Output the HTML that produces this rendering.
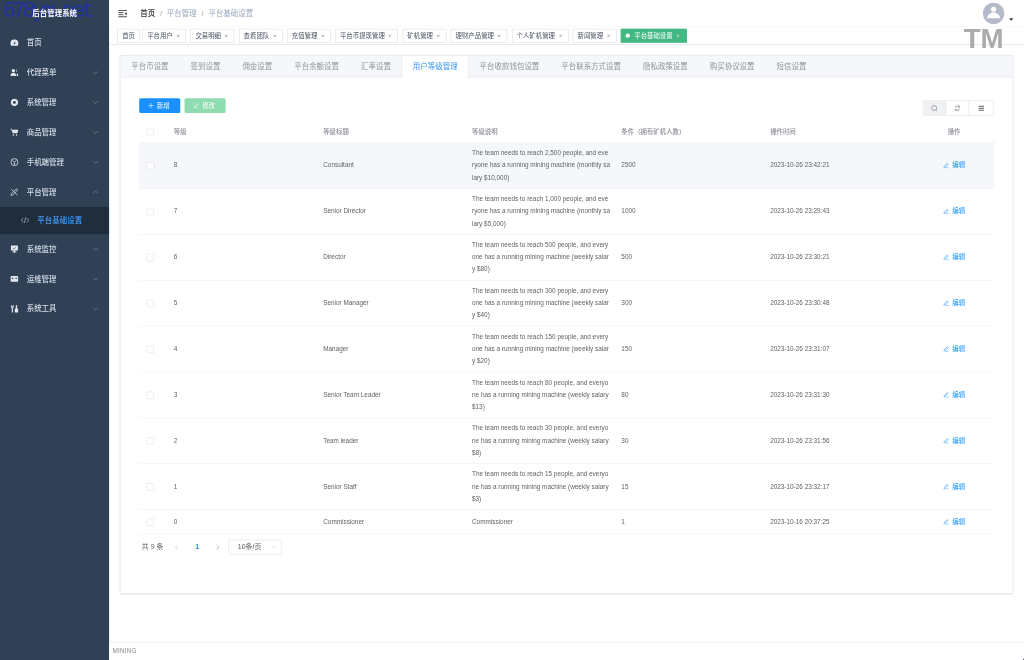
<!DOCTYPE html>
<html lang="zh-CN">
<head>
<meta charset="utf-8">
<title>后台管理系统</title>
<style>
*{box-sizing:border-box;margin:0;padding:0}
html,body{width:1024px;height:660px;overflow:hidden;background:#fff}
body{font-family:"Liberation Sans","Noto Sans CJK SC",sans-serif;color:#606266;-webkit-font-smoothing:antialiased}
#root{filter:blur(.25px);position:absolute;left:0;top:0;width:1920px;height:1238px;transform:scale(.533333);transform-origin:0 0;background:#fff;overflow:hidden;font-size:14px}
svg{display:block}
/* sidebar */
.sidebar{position:absolute;left:0;top:0;width:205px;height:1238px;background:#304156;overflow:hidden}
.wm{position:absolute;left:5px;top:-2px;font-family:"Liberation Mono",monospace;font-size:41px;line-height:44px;color:#2231a0;letter-spacing:-6.1px;white-space:nowrap;font-weight:400}
.logo{position:absolute;left:0;top:0;width:205px;height:50px;line-height:51px;text-align:center;color:#fff;font-weight:700;font-size:14px}
.menu{position:absolute;left:0;top:52px;width:205px}
.mi{position:relative;height:56px;line-height:56px;padding-left:20px;color:#bfcbd9;font-size:14px;white-space:nowrap}
.mi .ic{position:absolute;left:19px;top:20px;width:16px;height:16px;color:#e4e9f0}
.mi .tx{position:absolute;left:50px;top:0;font-weight:500;color:#d3dbe5}
.mi .ar{position:absolute;right:20px;top:22px;width:12px;height:12px}
.mi.sub{height:51px;line-height:51px;background:#1f2d3d}
.mi.sub .ic{left:39px;top:17px;color:#a9b5c4}
.mi.sub .tx{left:70px;color:#409eff}
/* main */
.main{position:absolute;left:205px;top:0;width:1715px;height:1238px;background:#fff}
.navbar{position:absolute;left:0;top:0;width:1715px;height:50px;background:#fff;box-shadow:0 1px 4px rgba(0,21,41,.08)}
.hamb{position:absolute;left:15px;top:15px;width:20px;height:20px}
.bc{position:absolute;left:58px;top:0;height:50px;line-height:50px;font-size:14px;white-space:nowrap}
.bc span{display:inline-block;vertical-align:top}
.bc .a{color:#303133;font-weight:500}
.bc .n{color:#97a8be}
.bc .s{margin:0 9px;color:#c0c4cc;font-weight:700}
.avatar{position:absolute;left:1638px;top:5px;width:40px;height:40px;border-radius:50%;background:#b5bacb;overflow:hidden}
.caret{position:absolute;left:1687px;top:34px;width:0;height:0;border:4.5px solid transparent;border-top:5px solid #303133}
.tm{position:absolute;left:1602px;top:44.5px;font-size:52px;line-height:54px;font-weight:700;color:#ababab;letter-spacing:-.5px;z-index:5}
.tags{position:absolute;left:0;top:50px;width:1715px;height:34px;background:#fff;border-bottom:1px solid #d8dce5;box-shadow:0 1px 3px 0 rgba(0,0,0,.12),0 0 3px 0 rgba(0,0,0,.04);white-space:nowrap;font-size:12px}
.tag{display:inline-block;position:relative;height:26px;line-height:24px;border:1px solid #d8dce5;color:#495060;background:#fff;padding:0 8px;font-size:12px;margin-left:5px;margin-top:4px;vertical-align:top}
.tag:first-child{margin-left:15px}
.tag .x{display:inline-block;width:16px;height:16px;vertical-align:-4px;color:#6d7582}
.tag.on{background:#42b983;color:#fff;border-color:#42b983}
.tag.on .x{color:#fff;margin-right:2px}
.tag.on .dot{display:inline-block;width:8px;height:8px;border-radius:50%;background:#fff;margin-right:8px;vertical-align:0}
/* app */
.card{position:absolute;left:20px;top:104px;width:1675px;height:1009px;background:#fff;border:1px solid #dcdfe6;box-shadow:0 2px 4px 0 rgba(0,0,0,.12),0 0 6px 0 rgba(0,0,0,.04)}
.thead{position:absolute;left:0;top:0;width:1673px;height:40px;background:#f5f7fa;border-bottom:1px solid #e4e7ed;white-space:nowrap;font-size:0}
.tab{display:inline-block;height:40px;line-height:40px;padding:0 20.100px;font-size:14px;color:#909399;vertical-align:top;border-left:1px solid transparent;border-right:1px solid transparent;margin-left:-1px}
.tab:first-child{margin-left:-1px}
.tab.on{color:#3a97f5;background:#fff;border-left-color:#dcdfe6;border-right-color:#dcdfe6;height:41px}
.footer{position:absolute;left:0;top:1204px;width:1715px;height:34px;border-top:1px solid #e5e5e5;font-size:12px;line-height:32px;padding-left:6px;color:#888;letter-spacing:.3px;background:#fff}
.dot-br{position:absolute;left:1916.500px;top:1233.500px;width:12px;height:12px;border-radius:50%;background:#3a4660}

.pane{position:absolute;left:35px;top:40px;width:1603px;height:960px}
.btn{position:absolute;top:39px;height:28px;border-radius:3px;color:#fff;font-size:12px;line-height:28px;white-space:nowrap}
.btn svg{position:absolute;left:16px;top:8px}
.btn span{position:absolute;left:33px;top:0}
.btn.add{left:0;width:77px;background:#1890ff}
.btn.upd{left:85px;width:77px;background:#8edcb0}
.tools{position:absolute;right:1px;top:43px;width:133px;height:29px;border:1px solid #dcdfe6;border-radius:3px;background:#fff;overflow:hidden}
.tb{position:absolute;top:0;width:43px;height:27px;border-left:1px solid #dcdfe6}
.tb svg{position:absolute;left:15px;top:7.5px}
.tb.first{left:0;border-left:0;background:#f0f1f3}
.tb:nth-child(2){left:42px}
.tb:nth-child(3){left:85px;width:46px}.tb:nth-child(3) svg{left:17px}
.tbl{position:absolute;left:0;top:82px;width:1603px;table-layout:fixed;border-collapse:separate;border-spacing:0;font-size:12px;color:#606266}
.tbl th,.tbl td{border-bottom:1px solid #ebeef5;padding:0 10px;text-align:left;vertical-align:middle;line-height:23px;font-weight:400;white-space:nowrap;overflow:hidden}
.tbl tr.h{height:41px}
.tbl th{color:#8a8e96;font-weight:500}
.tbl tr.r{height:86px}
.tbl tr.one{height:46px}
.hovbg{position:absolute;left:0;top:123px;width:1603px;height:85px;background:#f5f7fa}
.tbl .sel{padding:0 0 0 14px}
.tbl .op{text-align:center}
.cb{display:block;width:14px;height:14px;border:1px solid #dcdfe6;border-radius:2px;background:#fff}
.edit{display:inline-block;color:#1890ff;font-size:12px;line-height:23px;white-space:nowrap}
.edit svg{display:inline-block;vertical-align:-1.5px}
.edit span{margin-left:5px}
.pg{position:absolute;left:5px;top:867px;height:28px;line-height:28px;font-size:13px;color:#606266;white-space:nowrap}
.pg>span{position:absolute;top:0;height:28px}
.pg .total{left:0}
.pg .pb{left:50.400px;width:35.500px}
.pg .pb svg{position:absolute;left:8.800px;top:8px}
.pg .pn{left:85.900px;width:35.500px;text-align:center;color:#1890ff;font-weight:700}
.pg .pb.nx{left:121.400px}
.pg .pb.nx svg{left:14.800px}
.pg .sz{left:162px;width:100px;border:1px solid #dcdfe6;border-radius:3px;font-size:13px;line-height:26px;color:#606266}
.pg .sz span{position:absolute;left:0;width:78px;text-align:center}
.pg .sz svg{position:absolute;right:8px;top:7px}
</style>
</head>
<body>
<div id="root">
  <div class="sidebar">
    <div class="wm">678ym.net</div>
    <div class="logo">后台管理系统</div>
    <div class="menu">
      <div class="mi"><svg class="ic" viewBox="0 0 14 14"><path d="M7 1.800A6.600 6.600 0 0 0 .4 8.400c0 1.300.4 2.600 1.100 3.600h11c.7-1 1.100-2.300 1.100-3.600A6.600 6.600 0 0 0 7 1.800zm0 7.900a1.300 1.300 0 0 1-1.300-1.300c0-.5.300-1 .800-1.200L9.800 4.500 8.100 7.700c.100.200.200.400.200.700A1.300 1.300 0 0 1 7 9.700z" fill="currentColor"/></svg><span class="tx">首页</span></div>
      <div class="mi"><svg class="ic" viewBox="0 0 14 14"><circle cx="5.300" cy="4" r="2.700" fill="currentColor"/><path d="M.5 12.600c0-3.300 1.900-5.300 4.800-5.300s4.800 2 4.800 5.300z" fill="currentColor"/><path d="M9.300 1.600a2.600 2.600 0 0 1 0 5 3.800 3.800 0 0 0 0-5zM10.400 7.600c1.900.6 3.100 2.300 3.100 5h-2.300c0-2-.2-3.700-.8-5z" fill="currentColor"/></svg><span class="tx">代理菜单</span><svg class="ar" viewBox="0 0 12 12"><path d="M1.800 4l4.200 4.200L10.200 4" fill="none" stroke="#8795a8" stroke-width="1.200"/></svg></div>
      <div class="mi"><svg class="ic" viewBox="0 0 14 14"><path d="M7 .6l1.500 1.300 2-.3.700 1.900 1.800.9-.5 1.900.9 1.700-1.400 1.400-.1 2-2 .4L8.700 13.400 7 12.500l-1.700.9-1.200-1.600-2-.4-.1-2L.6 8l.9-1.700L1 4.400l1.800-.9.700-1.900 2 .3z" fill="currentColor"/><circle cx="7" cy="7" r="2.400" fill="#304156"/></svg><span class="tx">系统管理</span><svg class="ar" viewBox="0 0 12 12"><path d="M1.800 4l4.200 4.200L10.200 4" fill="none" stroke="#8795a8" stroke-width="1.200"/></svg></div>
      <div class="mi"><svg class="ic" viewBox="0 0 14 14"><path d="M.3 1.200h2.300l.6 1.600h10.300l-1.600 6H4.400L2 2.600H.3z" fill="currentColor"/><circle cx="5.300" cy="11.400" r="1.300" fill="currentColor"/><circle cx="10.500" cy="11.400" r="1.300" fill="currentColor"/></svg><span class="tx">商品管理</span><svg class="ar" viewBox="0 0 12 12"><path d="M1.800 4l4.200 4.200L10.200 4" fill="none" stroke="#8795a8" stroke-width="1.200"/></svg></div>
      <div class="mi"><svg class="ic" viewBox="0 0 14 14"><circle cx="7" cy="7" r="5.800" fill="none" stroke="currentColor" stroke-width="1.300"/><path d="M3.800 4.200L7 7.200l3.200-3M7 7.200v4.300" fill="none" stroke="currentColor" stroke-width="1.300"/></svg><span class="tx">手机端管理</span><svg class="ar" viewBox="0 0 12 12"><path d="M1.800 4l4.200 4.200L10.200 4" fill="none" stroke="#8795a8" stroke-width="1.200"/></svg></div>
      <div class="mi"><svg class="ic" viewBox="0 0 14 14"><path d="M1.300 12.700l.6-2.700 7.800-7.800a1.500 1.500 0 0 1 2.100 2.100L4 12.100z" fill="none" stroke="currentColor" stroke-width="1.200"/><path d="M1.800 2l10.400 10.400" stroke="currentColor" stroke-width="1.200" fill="none"/></svg><span class="tx">平台管理</span><svg class="ar" viewBox="0 0 12 12"><path d="M1.800 8L6 3.800 10.200 8" fill="none" stroke="#8795a8" stroke-width="1.200"/></svg></div>
      <div class="mi sub"><svg class="ic" viewBox="0 0 14 14"><path d="M4 3.500L.8 7 4 10.500M10 3.500L13.200 7 10 10.500M8.200 2.500L5.800 11.500" fill="none" stroke="currentColor" stroke-width="1.300"/></svg><span class="tx">平台基础设置</span></div>
      <div class="mi"><svg class="ic" viewBox="0 0 14 14"><path d="M1.300 1.300h11.400v8.200H8.300l.5 1.800h1.500v1.300H3.700v-1.300h1.500l.5-1.800H1.300z" fill="currentColor"/><path d="M4 5.500l2 1.800 3.500-3.300" stroke="#304156" stroke-width="1" fill="none"/></svg><span class="tx">系统监控</span><svg class="ar" viewBox="0 0 12 12"><path d="M1.800 4l4.200 4.200L10.200 4" fill="none" stroke="#8795a8" stroke-width="1.200"/></svg></div>
      <div class="mi"><svg class="ic" viewBox="0 0 14 14"><rect x=".8" y="2.300" width="12.400" height="9.400" rx="1.500" fill="currentColor"/><rect x="3" y="5" width="2.200" height="2.200" fill="#304156"/><rect x="8.800" y="5" width="2.200" height="2.200" fill="#304156"/></svg><span class="tx">运维管理</span><svg class="ar" viewBox="0 0 12 12"><path d="M1.800 4l4.200 4.200L10.200 4" fill="none" stroke="#8795a8" stroke-width="1.200"/></svg></div>
      <div class="mi"><svg class="ic" viewBox="0 0 14 14"><path d="M1.200 1v3.200c0 .8.600 1.400 1.400 1.500V13h1.900V5.700c.8-.1 1.400-.7 1.400-1.500V1H4.700v2.800H3.900V1H3.200v2.800h-.8V1z" fill="currentColor"/><path d="M9.300 1h2.200v5.200c1 .4 1.700 1.400 1.700 2.500V13H7.600V8.700c0-1.100.7-2.100 1.700-2.500z" fill="currentColor"/></svg><span class="tx">系统工具</span><svg class="ar" viewBox="0 0 12 12"><path d="M1.800 4l4.200 4.200L10.200 4" fill="none" stroke="#8795a8" stroke-width="1.200"/></svg></div>
    </div>
  </div>
  <div class="main">
    <div class="navbar">
      <svg class="hamb" viewBox="-2.500 -3 25 25"><g fill="#303133"><rect x="0" y="1.5" width="20" height="2"/><rect x="0" y="6.8" width="11.5" height="2"/><rect x="0" y="11.7" width="11.5" height="2"/><rect x="0" y="16.6" width="20" height="2"/><path d="M19.6 6.2v8l-5.2-4z"/></g></svg>
      <div class="bc"><span class="a">首页</span><span class="s">/</span><span class="n">平台管理</span><span class="s">/</span><span class="n">平台基础设置</span></div>
      <div class="avatar"><svg viewBox="0 0 40 40" width="40" height="40"><circle cx="20" cy="12.3" r="4.8" fill="#fff"/><path d="M7.5 29c2-5.500 5.500-10.500 12.500-10.500S30.500 23.500 32.500 29z" fill="#fff"/></svg></div>
      <div class="caret"></div>
    </div>
    <div class="tags"><span class="tag">首页</span><span class="tag">平台用户<i class="x"><svg viewBox="0 0 16 16" width="16" height="16"><path d="M8 6l4.200 4.200M12.200 6L8 10.200" stroke="currentColor" stroke-width="1" fill="none"/></svg></i></span>
      <span class="tag">交易明细<i class="x"><svg viewBox="0 0 16 16" width="16" height="16"><path d="M8 6l4.200 4.200M12.200 6L8 10.200" stroke="currentColor" stroke-width="1" fill="none"/></svg></i></span>
      <span class="tag">查看团队<i class="x"><svg viewBox="0 0 16 16" width="16" height="16"><path d="M8 6l4.200 4.200M12.200 6L8 10.200" stroke="currentColor" stroke-width="1" fill="none"/></svg></i></span>
      <span class="tag">充值管理<i class="x"><svg viewBox="0 0 16 16" width="16" height="16"><path d="M8 6l4.200 4.200M12.200 6L8 10.200" stroke="currentColor" stroke-width="1" fill="none"/></svg></i></span>
      <span class="tag">平台币提现管理<i class="x"><svg viewBox="0 0 16 16" width="16" height="16"><path d="M8 6l4.200 4.200M12.200 6L8 10.200" stroke="currentColor" stroke-width="1" fill="none"/></svg></i></span>
      <span class="tag">矿机管理<i class="x"><svg viewBox="0 0 16 16" width="16" height="16"><path d="M8 6l4.200 4.200M12.200 6L8 10.200" stroke="currentColor" stroke-width="1" fill="none"/></svg></i></span>
      <span class="tag">理财产品管理<i class="x"><svg viewBox="0 0 16 16" width="16" height="16"><path d="M8 6l4.200 4.200M12.200 6L8 10.200" stroke="currentColor" stroke-width="1" fill="none"/></svg></i></span>
      <span class="tag">个人矿机管理<i class="x"><svg viewBox="0 0 16 16" width="16" height="16"><path d="M8 6l4.200 4.200M12.200 6L8 10.200" stroke="currentColor" stroke-width="1" fill="none"/></svg></i></span>
      <span class="tag">新闻管理<i class="x"><svg viewBox="0 0 16 16" width="16" height="16"><path d="M8 6l4.200 4.200M12.200 6L8 10.200" stroke="currentColor" stroke-width="1" fill="none"/></svg></i></span>
      <span class="tag on"><b class="dot"></b>平台基础设置<i class="x"><svg viewBox="0 0 16 16" width="16" height="16"><path d="M8 6l4.200 4.200M12.200 6L8 10.200" stroke="currentColor" stroke-width="1" fill="none"/></svg></i></span>
    </div>
    <div class="tm">TM</div>
    <div class="card">
      <div class="thead"><span class="tab">平台币设置</span><span class="tab">签到设置</span><span class="tab">佣金设置</span><span class="tab">平台余额设置</span><span class="tab">汇率设置</span><span class="tab on">用户等级管理</span><span class="tab">平台收款钱包设置</span><span class="tab">平台联系方式设置</span><span class="tab">隐私政策设置</span><span class="tab">购买协议设置</span><span class="tab">短信设置</span></div>
      <div class="pane">
        <div class="btn add"><svg viewBox="0 0 12 12" width="12" height="12"><path d="M6 1v10M1 6h10" stroke="#fff" stroke-width="1.100" fill="none"/></svg><span>新增</span></div>
        <div class="btn upd"><svg viewBox="0 0 12 12" width="12" height="12"><path d="M2.300 8.300L8 2.200l1.700 1.600L4 9.900l-2.100.5z" fill="none" stroke="#fff" stroke-width="1"/><path d="M5.500 10.700h5" stroke="#fff" stroke-width="1"/></svg><span>修改</span></div>
        <div class="tools">
          <div class="tb first"><svg viewBox="0 0 12 12" width="12" height="12"><circle cx="5.600" cy="5.600" r="4.600" fill="none" stroke="#606266" stroke-width="1"/><path d="M9 9l2.300 2.300" stroke="#606266" stroke-width="1"/></svg></div>
          <div class="tb"><svg viewBox="0 0 12 12" width="12" height="12"><path d="M2 5a4.200 4.200 0 0 1 7.600-1.500M10 7a4.200 4.200 0 0 1-7.600 1.500" fill="none" stroke="#606266" stroke-width="1.100"/><path d="M9.900 1.200v2.600H7.300M2.100 10.800V8.200h2.600" fill="none" stroke="#606266" stroke-width="1.100"/></svg></div>
          <div class="tb"><svg viewBox="0 0 12 12" width="12" height="12"><path d="M1 2.300h10M1 6h10M1 9.700h10" stroke="#606266" stroke-width="2"/></svg></div>
        </div>
        <div class="hovbg"></div>
        <table class="tbl">
          <colgroup><col style="width:55px"><col style="width:280px"><col style="width:279px"><col style="width:280px"><col style="width:279px"><col style="width:280px"><col style="width:150px"></colgroup>
          <tr class="h"><th class="sel"><i class="cb"></i></th><th>等级</th><th>等级标题</th><th>等级说明</th><th>条件（拥有矿机人数）</th><th>操作时间</th><th class="op">操作</th></tr>
          <tr class="r hov"><td class="sel"><i class="cb"></i></td><td>8</td><td>Consultant</td><td>The team needs to reach 2,500 people, and eve<br>ryone has a running mining machine (monthly sa<br>lary $10,000)</td><td>2500</td><td>2023-10-26 23:42:21</td><td class="op"><span class="edit"><svg viewBox="0 0 12 12" width="12" height="12"><path d="M2.300 8.300L8 2.200l1.700 1.600L4 9.900l-2.100.5z" fill="none" stroke="currentColor" stroke-width="1"/><path d="M5.500 10.700h5" stroke="currentColor" stroke-width="1"/></svg><span>编辑</span></span></td></tr>
          <tr class="r"><td class="sel"><i class="cb"></i></td><td>7</td><td>Senior Director</td><td>The team needs to reach 1,000 people, and eve<br>ryone has a running mining machine (monthly sa<br>lary $5,000)</td><td>1000</td><td>2023-10-26 23:29:43</td><td class="op"><span class="edit"><svg viewBox="0 0 12 12" width="12" height="12"><path d="M2.300 8.300L8 2.200l1.700 1.600L4 9.900l-2.100.5z" fill="none" stroke="currentColor" stroke-width="1"/><path d="M5.500 10.700h5" stroke="currentColor" stroke-width="1"/></svg><span>编辑</span></span></td></tr>
          <tr class="r"><td class="sel"><i class="cb"></i></td><td>6</td><td>Director</td><td>The team needs to reach 500 people, and every<br>one has a running mining machine (weekly salar<br>y $80)</td><td>500</td><td>2023-10-26 23:30:21</td><td class="op"><span class="edit"><svg viewBox="0 0 12 12" width="12" height="12"><path d="M2.300 8.300L8 2.200l1.700 1.600L4 9.900l-2.100.5z" fill="none" stroke="currentColor" stroke-width="1"/><path d="M5.500 10.700h5" stroke="currentColor" stroke-width="1"/></svg><span>编辑</span></span></td></tr>
          <tr class="r"><td class="sel"><i class="cb"></i></td><td>5</td><td>Senior Manager</td><td>The team needs to reach 300 people, and every<br>one has a running mining machine (weekly salar<br>y $40)</td><td>300</td><td>2023-10-26 23:30:48</td><td class="op"><span class="edit"><svg viewBox="0 0 12 12" width="12" height="12"><path d="M2.300 8.300L8 2.200l1.700 1.600L4 9.900l-2.100.5z" fill="none" stroke="currentColor" stroke-width="1"/><path d="M5.500 10.700h5" stroke="currentColor" stroke-width="1"/></svg><span>编辑</span></span></td></tr>
          <tr class="r"><td class="sel"><i class="cb"></i></td><td>4</td><td>Manager</td><td>The team needs to reach 150 people, and every<br>one has a running mining machine (weekly salar<br>y $20)</td><td>150</td><td>2023-10-26 23:31:07</td><td class="op"><span class="edit"><svg viewBox="0 0 12 12" width="12" height="12"><path d="M2.300 8.300L8 2.200l1.700 1.600L4 9.900l-2.100.5z" fill="none" stroke="currentColor" stroke-width="1"/><path d="M5.500 10.700h5" stroke="currentColor" stroke-width="1"/></svg><span>编辑</span></span></td></tr>
          <tr class="r"><td class="sel"><i class="cb"></i></td><td>3</td><td>Senior Team Leader</td><td>The team needs to reach 80 people, and everyo<br>ne has a running mining machine (weekly salary<br>$13)</td><td>80</td><td>2023-10-26 23:31:30</td><td class="op"><span class="edit"><svg viewBox="0 0 12 12" width="12" height="12"><path d="M2.300 8.300L8 2.200l1.700 1.600L4 9.900l-2.100.5z" fill="none" stroke="currentColor" stroke-width="1"/><path d="M5.500 10.700h5" stroke="currentColor" stroke-width="1"/></svg><span>编辑</span></span></td></tr>
          <tr class="r"><td class="sel"><i class="cb"></i></td><td>2</td><td>Team leader</td><td>The team needs to reach 30 people, and everyo<br>ne has a running mining machine (weekly salary<br>$8)</td><td>30</td><td>2023-10-26 23:31:56</td><td class="op"><span class="edit"><svg viewBox="0 0 12 12" width="12" height="12"><path d="M2.300 8.300L8 2.200l1.700 1.600L4 9.900l-2.100.5z" fill="none" stroke="currentColor" stroke-width="1"/><path d="M5.500 10.700h5" stroke="currentColor" stroke-width="1"/></svg><span>编辑</span></span></td></tr>
          <tr class="r"><td class="sel"><i class="cb"></i></td><td>1</td><td>Senior Staff</td><td>The team needs to reach 15 people, and everyo<br>ne has a running mining machine (weekly salary<br>$3)</td><td>15</td><td>2023-10-26 23:32:17</td><td class="op"><span class="edit"><svg viewBox="0 0 12 12" width="12" height="12"><path d="M2.300 8.300L8 2.200l1.700 1.600L4 9.900l-2.100.5z" fill="none" stroke="currentColor" stroke-width="1"/><path d="M5.500 10.700h5" stroke="currentColor" stroke-width="1"/></svg><span>编辑</span></span></td></tr>
          <tr class="r one"><td class="sel"><i class="cb"></i></td><td>0</td><td>Commissioner</td><td>Commissioner</td><td>1</td><td>2023-10-16 20:37:25</td><td class="op"><span class="edit"><svg viewBox="0 0 12 12" width="12" height="12"><path d="M2.300 8.300L8 2.200l1.700 1.600L4 9.900l-2.100.5z" fill="none" stroke="currentColor" stroke-width="1"/><path d="M5.500 10.700h5" stroke="currentColor" stroke-width="1"/></svg><span>编辑</span></span></td></tr>
        </table>
        <div class="pg"><span class="total">共 9 条</span><span class="pb"><svg viewBox="0 0 12 12" width="12" height="12"><path d="M7.800 2L3.800 6l4 4" fill="none" stroke="#c0c4cc" stroke-width="1.200"/></svg></span><span class="pn">1</span><span class="pb nx"><svg viewBox="0 0 12 12" width="12" height="12"><path d="M4.200 2l4 4-4 4" fill="none" stroke="#909399" stroke-width="1.200"/></svg></span><span class="sz"><span>10条/页</span><svg viewBox="0 0 12 12" width="12" height="12"><path d="M2.500 4.500L6 8l3.500-3.500" fill="none" stroke="#c0c4cc" stroke-width="1.100"/></svg></span></div>
      </div>
    </div>
    <div class="footer">MINING</div>
  </div>
  <div class="dot-br"></div>
</div>
</body>
</html>
